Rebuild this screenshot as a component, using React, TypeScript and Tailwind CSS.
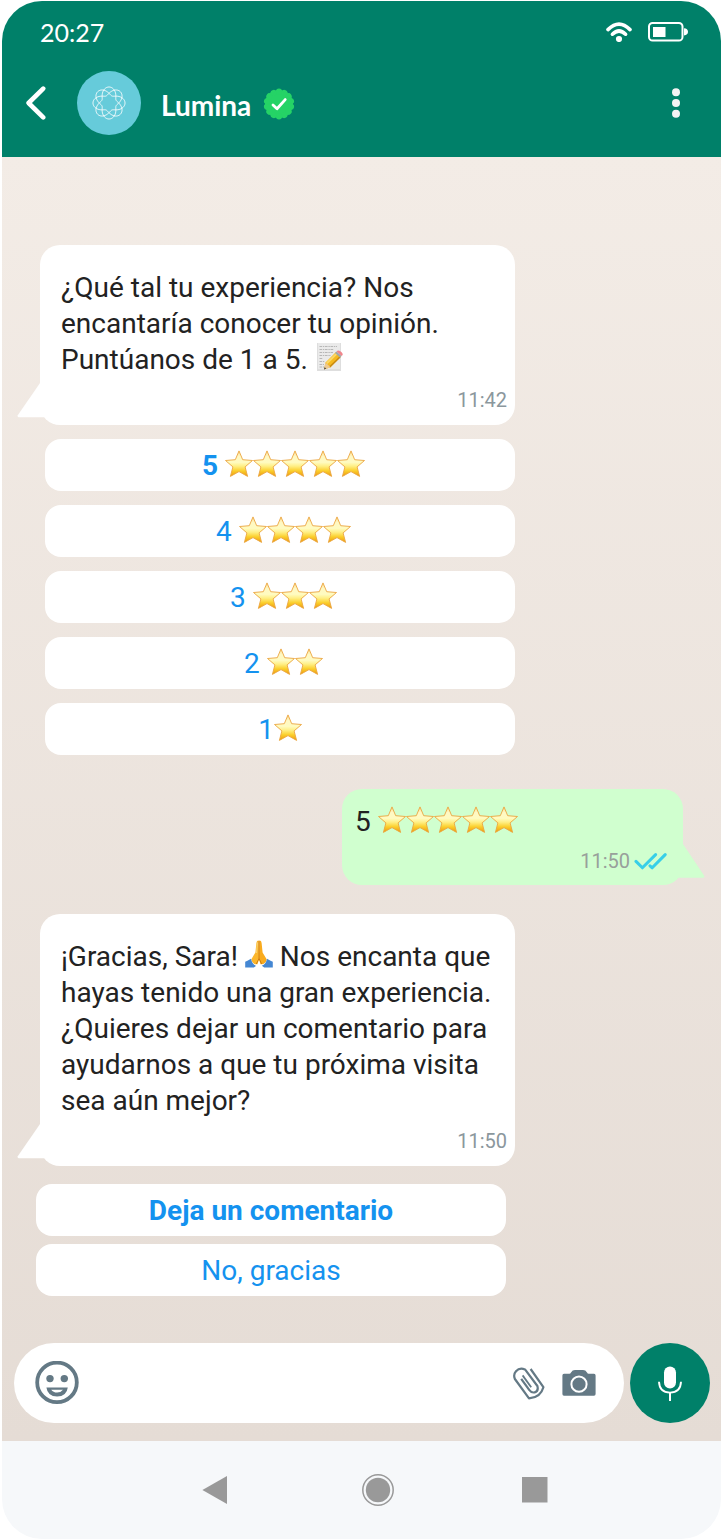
import React, { useId } from 'react';

const Star: React.FC = () => {
  const id = useId();
  return (
    <svg viewBox="0 0 28 28" className="w-7 h-7 shrink-0" aria-hidden="true">
      <defs>
        <linearGradient id={id} x1="0" y1="0" x2="0" y2="1">
          <stop offset="0" stopColor="#fbd98a" />
          <stop offset="0.22" stopColor="#fff8c4" />
          <stop offset="0.45" stopColor="#fffbc0" />
          <stop offset="0.6" stopColor="#ffef84" />
          <stop offset="0.78" stopColor="#fbcf2c" />
          <stop offset="1" stopColor="#ec980c" />
        </linearGradient>
      </defs>
      <path
        d="M14 0.9 L17.7 9.7 L27.5 10.5 L20.1 16.9 L22.6 26.4 L14 21.6 L5.4 26.4 L7.9 16.9 L0.5 10.5 L10.3 9.7 Z"
        fill={`url(#${id})`}
        stroke="#eba540"
        strokeWidth="0.9"
        strokeLinejoin="round"
      />
    </svg>
  );
};

const Stars: React.FC<{ count: number }> = ({ count }) => (
  <span className="flex pb-1" role="img" aria-label={`${count} estrellas`}>
    {Array.from({ length: count }, (_, i) => (
      <Star key={i} />
    ))}
  </span>
);

const MemoEmoji: React.FC = () => (
  <svg viewBox="0 0 28 28" className="inline-block w-7 h-7 align-[-2px]" role="img" aria-label="nota">
    <rect x="2" y="0" width="24" height="28" fill="#dedede" />
    <rect x="3" y="0" width="22" height="26" fill="#eaeaea" />
    <g stroke="#a9a9a9" strokeWidth="0.8" strokeDasharray="2.6 0.8 1.4 0.7">
      <path d="M4.5 3.5H22M4.5 6.5H19M4.5 9.5H18M4.5 12.5H16M4.5 15.5H8M4.5 18.5H10M4.5 21.5H9M4.5 24H10" />
    </g>
    <path d="M10.5 19.5 L21 9 L26 13.5 L15.5 24.3 L9 26.4 Z" fill="#f5b921" />
    <path d="M11.8 20.3 L22.3 10" stroke="#fbd866" strokeWidth="2" />
    <path d="M14.6 24 L25 14" stroke="#c98a14" strokeWidth="1.6" />
    <path d="M10.5 19.5 L15.5 24.3 L9 26.4 Z" fill="#ecc994" />
    <path d="M9.6 24.2 L11.2 25.6 L9 26.4 Z" fill="#3a3a3a" />
    <path d="M20 10 L21.6 8.4 L26.6 13 L25 14.6 Z" fill="#9da8ad" />
    <path d="M21.6 8.4 L22.4 7.8 Q24 6.8 26.4 9 Q28.4 11 27.4 12.2 L26.6 13 Z" fill="#f0868c" />
  </svg>
);

const PrayEmoji: React.FC = () => (
  <svg viewBox="0 0 28 28" className="inline-block w-7 h-7 align-[-2px]" role="img" aria-label="gracias">
    <path d="M13.8 0.6 Q11.6 0.4 11.4 3 L10.4 12.5 L6.2 19.5 Q8 25 12.5 24.2 L14 19.5 Z" fill="#fbb62c" />
    <path d="M14.2 0.6 Q16.4 0.4 16.6 3 L17.6 12.5 L21.8 19.5 Q20 25 15.5 24.2 L14 19.5 Z" fill="#f9ab1e" />
    <path d="M14 1 V18.5 M14 18.5 L11.3 24 M14 18.5 L16.7 24" stroke="#c9780f" strokeWidth="0.9" fill="none" />
    <path d="M12.4 2.5 L11.6 13" stroke="#fdd878" strokeWidth="1" />
    <path d="M6 18.8 Q1.8 21.2 0.2 21.8 V27.6 H8.8 L11.2 25.8 Q7 24.6 6 18.8 Z" fill="#4587d3" />
    <path d="M22 18.8 Q26.2 21.2 27.8 21.8 V27.6 H19.2 L16.8 25.8 Q21 24.6 22 18.8 Z" fill="#4587d3" />
  </svg>
);

const WifiIcon: React.FC = () => (
  <svg viewBox="0 0 26 20" className="w-[26px] h-5" fill="none" stroke="#fff" strokeLinecap="round" aria-hidden="true">
    <path d="M2 7.6 Q13 -3.2 24 7.6" strokeWidth="3.6" />
    <path d="M6.4 12.2 Q13 5.8 19.6 12.2" strokeWidth="3.6" />
    <circle cx="13" cy="17" r="3.1" fill="#fff" stroke="none" />
  </svg>
);

const BatteryIcon: React.FC = () => (
  <svg viewBox="0 0 40 20" className="w-10 h-5" aria-hidden="true">
    <rect x="1" y="1" width="33.5" height="17.6" rx="3.6" fill="none" stroke="#fff" strokeWidth="2" />
    <rect x="5" y="5" width="12.5" height="10" fill="#fff" />
    <path d="M36 6.2 Q40 6.6 40 9.8 Q40 13 36 13.4 Z" fill="#fff" />
  </svg>
);

const BackIcon: React.FC = () => (
  <svg viewBox="0 0 20 34" className="w-5 h-[34px]" fill="none" stroke="#fff" strokeWidth="4.6" strokeLinecap="round" strokeLinejoin="round" aria-hidden="true">
    <path d="M17.2 2.6 L2.6 17 L17.2 31.4" />
  </svg>
);

// one closed line that goes round three times and makes eight petals
const petals = Array.from({ length: 360 }, (_, i) => {
  const t = (i / 360) * Math.PI * 6;
  const r = 11.8 + 4.2 * Math.cos((8 * t) / 3);
  return `${(32 + r * Math.cos(t)).toFixed(2)},${(32 + r * Math.sin(t)).toFixed(2)}`;
}).join(' ');

const LuminaLogo: React.FC = () => (
  <svg viewBox="0 0 64 64" className="w-16 h-16 rounded-full bg-[#66cbda]" fill="none" stroke="#fff" strokeWidth="0.9" aria-hidden="true">
    <polygon points={petals} />
  </svg>
);

const VerifiedBadge: React.FC = () => (
  <svg viewBox="0 0 32 32" className="w-8 h-8" role="img" aria-label="Verificado">
    <g fill="#25d366">
      <circle cx="16" cy="16" r="14" />
      {Array.from({ length: 14 }, (_, i) => (
        <circle key={i} cx="16" cy="3.6" r="3" transform={`rotate(${(i * 360) / 14} 16 16)`} />
      ))}
    </g>
    <path d="M10 17 L14 20.8 L22.2 11.6" fill="none" stroke="#fff" strokeWidth="2.8" strokeLinecap="round" strokeLinejoin="round" />
  </svg>
);

const DotsIcon: React.FC = () => (
  <svg viewBox="0 0 8 30" className="w-2 h-[30px]" fill="#f3f3f3" aria-hidden="true">
    <circle cx="4" cy="4.3" r="4" />
    <circle cx="4" cy="15" r="4" />
    <circle cx="4" cy="25.7" r="4" />
  </svg>
);

const DoubleCheck: React.FC = () => (
  <svg viewBox="0 0 33 18" className="w-[33px] h-[18px]" fill="none" stroke="#37cfe8" strokeWidth="3" strokeLinecap="round" strokeLinejoin="round" aria-hidden="true">
    <path d="M2 9.4 L8.4 15.8 L21.6 2.6" />
    <path d="M16 13.8 L18.2 15.8 L31.2 2.6" />
  </svg>
);

const SmileIcon: React.FC = () => (
  <svg viewBox="0 0 44 44" className="w-11 h-11" fill="#647985" aria-hidden="true">
    <circle cx="22" cy="21.4" r="19.8" fill="none" stroke="#647985" strokeWidth="3.8" />
    <circle cx="15" cy="17.6" r="3.7" />
    <circle cx="29.3" cy="17.6" r="3.7" />
    <path fillRule="evenodd" d="M11.4 26.4 H32.8 Q31.6 35.4 22.1 35.4 Q12.6 35.4 11.4 26.4 Z M16.2 28.8 Q18.2 31.6 22.1 31.6 Q26 31.6 28 28.8 Z" />
  </svg>
);

const ClipIcon: React.FC = () => (
  <svg viewBox="0 0 34 34" className="w-[34px] h-[34px]" fill="none" stroke="#647985" strokeWidth="2.2" strokeLinejoin="round" aria-hidden="true">
    <path d="M18.6 3 L31.4 21.2 Q28.6 31.6 17 32.4 L2.9 13 Q1 8.6 4 5.2 Q7.6 1 13 3.4 L25.4 20 Q26.8 25 22.6 26.4 Q19.4 27 17.4 24.2 L9.2 12.8" />
    <path d="M10.6 9.4 L19.2 21.2" strokeWidth="1.8" />
  </svg>
);

const CameraIcon: React.FC = () => (
  <svg viewBox="0 0 34 28" className="w-[34px] h-7" aria-hidden="true">
    <path d="M2 4.8 H7.4 Q8.4 4.8 9 3.4 Q10.4 1 13 1 H21 Q23.6 1 25 3.4 Q25.6 4.8 26.6 4.8 H32 Q33.6 4.8 33.6 6.4 V25 Q33.6 26.8 32 26.8 H2 Q0.4 26.8 0.4 25 V6.4 Q0.4 4.8 2 4.8 Z" fill="#647985" />
    <circle cx="17" cy="15.2" r="7.6" fill="none" stroke="#fff" strokeWidth="2" />
  </svg>
);

const MicIcon: React.FC = () => (
  <svg viewBox="0 0 24 36" className="w-6 h-9" fill="none" stroke="#fff" aria-hidden="true">
    <rect x="6" y="1.4" width="12" height="22" rx="6" fill="#fff" stroke="none" />
    <path d="M1 16.8 Q1.4 27.6 12 27.6 Q22.6 27.6 23 16.8" strokeWidth="1.9" />
    <path d="M12 27.6 V36" strokeWidth="2" />
  </svg>
);

interface BubbleProps {
  time: string;
  children: React.ReactNode;
}

const IncomingBubble: React.FC<BubbleProps> = ({ time, children }) => (
  <div className="relative ml-[38px] w-full max-w-[475px] rounded-[20px] bg-white pt-[25px] pb-[13px] pl-[21px] pr-2">
    <svg viewBox="0 0 30 36" className="absolute -left-[23px] bottom-[7px] w-[30px] h-9" fill="#fff" aria-hidden="true">
      <path d="M23 1 L0.6 33.4 Q0.4 35.3 2 35.3 H30 V1 Z" />
    </svg>
    <p className="text-[28px] leading-9 text-[#222]">{children}</p>
    <p className="mt-2.5 text-right text-xl leading-6 text-[#8b979d]">{time}</p>
  </div>
);

const replyClass = 'flex h-[52px] w-full max-w-[470px] items-center justify-center rounded-2xl bg-white pt-0.5 text-[28px] leading-9 text-[#1492ef] whitespace-pre';

const ratings = [
  { label: ' 5 ', count: 5, selected: true },
  { label: ' 4 ', count: 4, selected: false },
  { label: ' 3 ', count: 3, selected: false },
  { label: ' 2 ', count: 2, selected: false },
  { label: '1', count: 1, selected: false },
];

const App: React.FC = () => {
  return (
    <div className="bg-white pt-px pl-0.5 font-[Roboto,sans-serif]">
      <div className="overflow-hidden rounded-[40px]">
        <header className="bg-[#008069] pb-[22px] text-white">
          <div className="flex items-center justify-between pt-[15px] pl-[38px] pr-[33px] font-[Lato,sans-serif]">
            <span className="text-[25px] leading-8">20:27</span>
            <div className="flex items-center gap-4">
              <WifiIcon />
              <BatteryIcon />
            </div>
          </div>
          <div className="mt-[23px] flex items-center pl-6 pr-[41px]">
            <button type="button" aria-label="Atrás">
              <BackIcon />
            </button>
            <div className="ml-[31px]">
              <LuminaLogo />
            </div>
            <h1 className="ml-5 pt-1 font-[Lato,sans-serif] text-[28px] leading-8 font-bold">Lumina</h1>
            <div className="ml-3 pt-0.5">
              <VerifiedBadge />
            </div>
            <button type="button" aria-label="Más opciones" className="ml-auto">
              <DotsIcon />
            </button>
          </div>
        </header>

        <main className="bg-linear-to-b from-[#f3ece6] to-[#e5dcd5] pt-[88px] pb-[18px]">
          <IncomingBubble time="11:42">
            ¿Qué tal tu experiencia? Nos
            <br />
            encantaría conocer tu opinión.
            <br />
            Puntúanos de 1 a 5. <MemoEmoji />
          </IncomingBubble>

          <div className="mt-3.5 ml-[43px] flex flex-col gap-3.5">
            {ratings.map(rating => (
              <button
                key={rating.count}
                type="button"
                className={`${replyClass} ${rating.selected ? 'font-bold' : 'font-normal'}`}
              >
                {rating.label}
                <Stars count={rating.count} />
              </button>
            ))}
          </div>

          <div className="relative mt-[34px] mr-[38px] ml-auto w-full max-w-[341px] rounded-[20px] bg-[#d0ffcf] pt-[15px] pb-3 pl-[13px] pr-4">
            <svg viewBox="0 0 30 36" className="absolute -right-[22px] bottom-[6px] w-[30px] h-9" fill="#d0ffcf" aria-hidden="true">
              <path d="M8 1 L29.4 33 Q29.8 34.8 28 34.8 H0 V1 Z" />
            </svg>
            <p className="flex h-9 items-center text-[28px] leading-9 text-[#222] whitespace-pre">
              {'5 '}
              <Stars count={5} />
            </p>
            <p className="relative mt-[9px] flex items-center justify-end gap-1 text-xl leading-6 text-[#98a09b]">
              11:50
              <DoubleCheck />
            </p>
          </div>

          <div className="mt-[29px]">
            <IncomingBubble time="11:50">
              ¡Gracias, Sara! <PrayEmoji /> Nos encanta que
              <br />
              hayas tenido una gran experiencia.
              <br />
              ¿Quieres dejar un comentario para
              <br />
              ayudarnos a que tu próxima visita
              <br />
              sea aún mejor?
            </IncomingBubble>
          </div>

          <div className="mt-[18px] ml-[34px] flex flex-col gap-2">
            <button type="button" className={`${replyClass} font-bold`}>Deja un comentario</button>
            <button type="button" className={`${replyClass} font-normal`}>No, gracias</button>
          </div>

          <div className="mt-[47px] flex items-center gap-1.5 pl-3 pr-[11px]">
            <div className="flex h-20 flex-1 items-center rounded-full bg-white pl-[21px] pr-7">
              <button type="button" aria-label="Emojis">
                <SmileIcon />
              </button>
              <input type="text" aria-label="Mensaje" className="mx-3 min-w-0 flex-1 bg-transparent text-[28px] text-[#222] outline-none" />
              <button type="button" aria-label="Adjuntar">
                <ClipIcon />
              </button>
              <button type="button" aria-label="Cámara" className="ml-4">
                <CameraIcon />
              </button>
            </div>
            <button type="button" aria-label="Grabar audio" className="flex size-20 items-center justify-center rounded-full bg-[#008069]">
              <MicIcon />
            </button>
          </div>
        </main>

        <nav className="flex h-[98px] items-center justify-center gap-32 bg-[#f6f8fa] pl-[33px]" aria-label="Sistema">
          <button type="button" aria-label="Volver">
            <svg viewBox="0 0 32 32" className="size-8" fill="#999">
              <path d="M0.4 16 L25 2 V30 Z" />
            </svg>
          </button>
          <button type="button" aria-label="Inicio">
            <svg viewBox="0 0 32 32" className="size-8" fill="#999">
              <circle cx="16" cy="16" r="12.2" />
              <circle cx="16" cy="16" r="15.2" fill="none" stroke="#999" strokeWidth="1.5" />
            </svg>
          </button>
          <button type="button" aria-label="Recientes">
            <svg viewBox="0 0 32 32" className="size-8" fill="#999">
              <rect x="0" y="3" width="25.5" height="25.5" />
            </svg>
          </button>
        </nav>
      </div>
    </div>
  );
};

export default App;
